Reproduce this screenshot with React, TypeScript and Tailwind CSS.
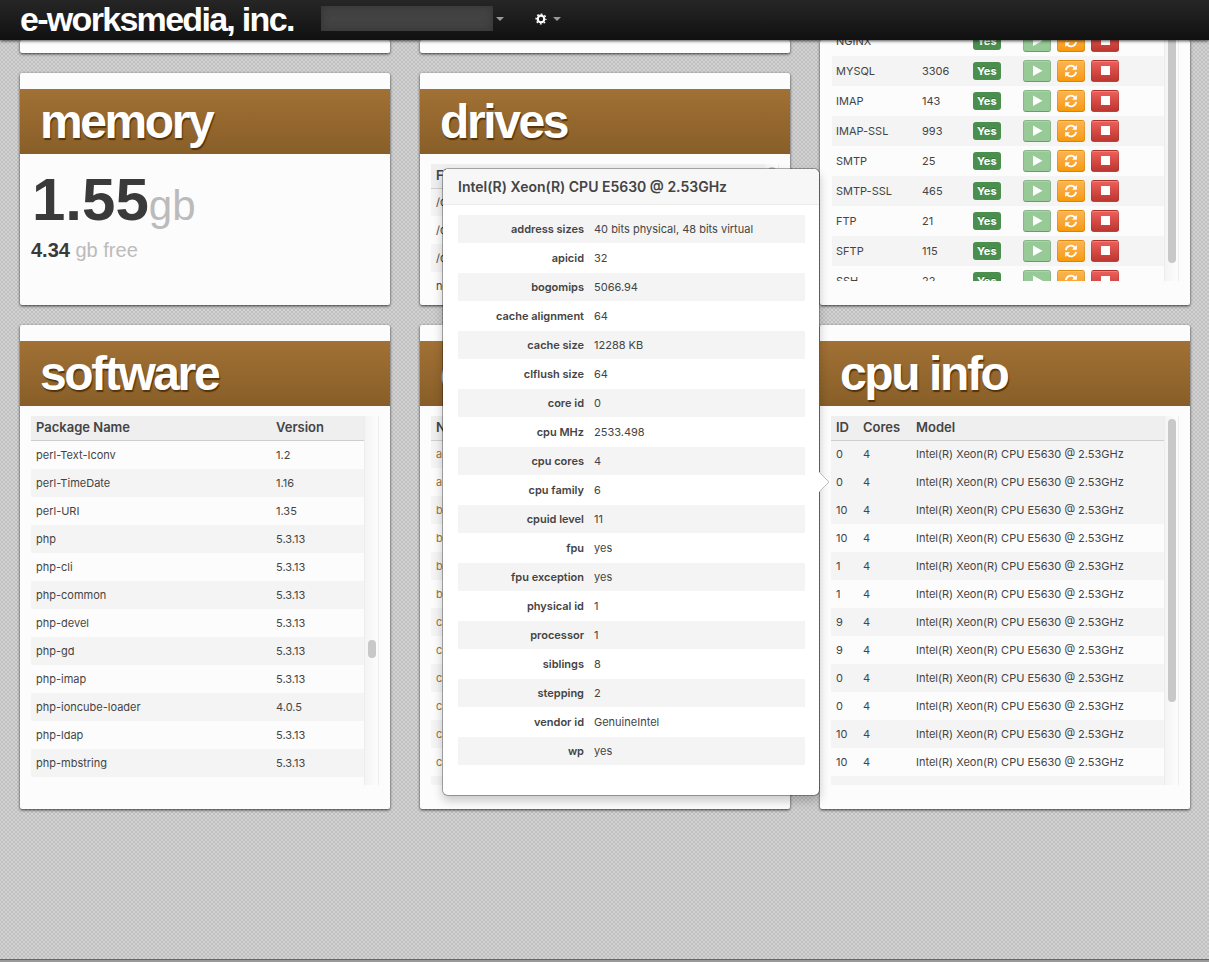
import React from "react";

type Row = string[];

const services: Row[] = [
  ["NGINX", ""],
  ["MYSQL", "3306"],
  ["IMAP", "143"],
  ["IMAP-SSL", "993"],
  ["SMTP", "25"],
  ["SMTP-SSL", "465"],
  ["FTP", "21"],
  ["SFTP", "115"],
  ["SSH", "22"],
];

const packages: Row[] = [
  ["perl-Text-Iconv", "1.2"],
  ["perl-TimeDate", "1.16"],
  ["perl-URI", "1.35"],
  ["php", "5.3.13"],
  ["php-cli", "5.3.13"],
  ["php-common", "5.3.13"],
  ["php-devel", "5.3.13"],
  ["php-gd", "5.3.13"],
  ["php-imap", "5.3.13"],
  ["php-ioncube-loader", "4.0.5"],
  ["php-ldap", "5.3.13"],
  ["php-mbstring", "5.3.13"],
];

const model = "Intel(R) Xeon(R) CPU E5630 @ 2.53GHz";
const cpuIds = ["0", "0", "10", "10", "1", "1", "9", "9", "0", "0", "10", "10"];

const details: Row[] = [
  ["address sizes", "40 bits physical, 48 bits virtual"],
  ["apicid", "32"],
  ["bogomips", "5066.94"],
  ["cache alignment", "64"],
  ["cache size", "12288 KB"],
  ["clflush size", "64"],
  ["core id", "0"],
  ["cpu MHz", "2533.498"],
  ["cpu cores", "4"],
  ["cpu family", "6"],
  ["cpuid level", "11"],
  ["fpu", "yes"],
  ["fpu exception", "yes"],
  ["physical id", "1"],
  ["processor", "1"],
  ["siblings", "8"],
  ["stepping", "2"],
  ["vendor id", "GenuineIntel"],
  ["wp", "yes"],
];

const domains = ["a", "a", "b", "b", "b", "b", "c", "c", "c", "c", "c", "c"];

const cardBox = "bg-[#fcfcfc] rounded-[2px] shadow-[0_1px_3px_rgba(0,0,0,0.75)]";

function Card({ title, children, className = "" }: { title: string; children: React.ReactNode; className?: string }) {
  return (
    <section className={`${cardBox} relative flex flex-col pt-4 ${className}`}>
      <h2 className="h-[65px] shrink-0 bg-linear-to-b from-[#a17135] to-[#885e28] pl-5 font-['Liberation_Sans',sans-serif] text-[48px] leading-[66px] font-bold tracking-tighter text-white [text-shadow:1px_2px_1px_rgba(70,40,0,0.8)]">
        {title}
      </h2>
      {children}
    </section>
  );
}

function Scroller({ children, thumb, className = "" }: { children: React.ReactNode; thumb: string; className?: string }) {
  return (
    <div className={`flex overflow-hidden px-[11px] ${className}`}>
      <div className="min-w-0 flex-1">{children}</div>
      <div className="w-[15px] shrink-0 self-stretch border-x border-[#ececec] bg-linear-to-r from-[#f4f4f4] to-[#fdfdfd] px-[3px]">
        <div className={`w-2 rounded-full bg-[#c8c8c8] ${thumb}`} />
      </div>
    </div>
  );
}

const headRow = "h-6 border-b border-[#cfcfcf] bg-[#efefef] text-left text-[13px] leading-[23px]";
const th = "pl-[5px] font-semibold";
const td = "py-0 pl-[5px] whitespace-nowrap";

function Play() {
  return (
    <svg viewBox="0 0 14 14" className="size-[14px]" fill="#fff"><path d="M3 1.5v10.5l9.5-5.2z" /></svg>
  );
}

function Refresh() {
  return (
    <svg viewBox="0 0 14 14" className="size-[14px]" fill="none" stroke="#fff" strokeWidth="1.8">
      <path d="M1.9 6.2A5.1 5.1 0 0 1 10.9 3.6" />
      <path d="M12.1 7.8A5.1 5.1 0 0 1 3.1 10.4" />
      <path d="M12.8 1v4.8H8z" fill="#fff" stroke="none" />
      <path d="M1.2 13V8.2H6z" fill="#fff" stroke="none" />
    </svg>
  );
}

function Stop() {
  return (
    <svg viewBox="0 0 14 14" className="size-[14px]" fill="#fff"><path d="M3 2h9v9H3z" /></svg>
  );
}

const btn = "flex h-[22px] w-7 items-center justify-center rounded-[3px] border border-black/10 border-b-black/25 shadow-[inset_0_1px_0_rgba(255,255,255,0.2)]";

export default function App() {
  return (
    <div className="flex min-h-screen flex-col bg-[#d2d2d2] bg-[radial-gradient(#c0c0c0_28%,transparent_30%),radial-gradient(#c0c0c0_28%,transparent_30%)] bg-size-[4px_4px] bg-position-[0_0,2px_2px] font-['Inter',sans-serif] text-[11px] text-[#444]">
      <header className="relative z-30 flex h-10 items-center bg-linear-to-b from-[#262626] to-[#111] pb-[3px] pl-5 shadow-[0_1px_3px_rgba(0,0,0,0.7)]">
        <a href="#" className="w-[301px] font-['Liberation_Sans',sans-serif] text-[34px] leading-9 font-bold tracking-tighter whitespace-nowrap text-white">
          e-worksmedia, inc.
        </a>
        <button aria-label="Server" className="flex items-center gap-[3px]">
          <span className="h-[25px] w-[172px] bg-[#434343] shadow-[inset_0_0_8px_#333]" />
          <span className="border-x-4 border-t-4 border-x-transparent border-t-[#999]" />
        </button>
        <button aria-label="Settings" className="ml-[30px] flex items-center gap-[5px]">
          <svg viewBox="0 0 14 14" className="size-[14px]" fill="none" stroke="#fff">
            <circle cx="7" cy="7" r="3.3" strokeWidth="2.2" />
            <circle cx="7" cy="7" r="4.9" strokeWidth="1.4" strokeDasharray="1.8 2.05" strokeDashoffset="0.9" />
          </svg>
          <span className="border-x-4 border-t-4 border-x-transparent border-t-[#999]" />
        </button>
      </header>

      <main className="grid grid-cols-3 gap-x-[30px] gap-y-5 pr-[19px] pl-5">
        <div className={`${cardBox} h-[13px]`} />
        <div className={`${cardBox} h-[13px]`} />

        <section className={`${cardBox} row-span-2 pb-6`}>
          <Scroller className="h-[241px]" thumb="h-[223px] rounded-t-none">
            <table className="-mt-3.5 ml-px w-[calc(100%-1px)] table-fixed border-collapse">
              <tbody>
                {services.map(([name, port], i) => (
                  <tr key={name} className={`h-[30px] ${i % 2 ? "bg-[#f4f4f4]" : ""}`}>
                    <td className="w-[85px] py-0 pl-1 whitespace-nowrap">{name}</td>
                    <td className={`${td} w-[51px]`}>{port}</td>
                    <td className={`${td} w-[50px]`}>
                      <span className="inline-block h-[18px] rounded-[3px] bg-[#4b8f4e] px-1 leading-[18px] font-bold text-white [text-shadow:0_-1px_0_rgba(0,0,0,0.25)]">Yes</span>
                    </td>
                    <td className={td}>
                      <div className="flex gap-1.5">
                        <button aria-label={`Start ${name}`} className={`${btn} bg-[#97ca97]`}><Play /></button>
                        <button aria-label={`Restart ${name}`} className={`${btn} bg-linear-to-b from-[#fbb450] to-[#f89a06]`}><Refresh /></button>
                        <button aria-label={`Stop ${name}`} className={`${btn} bg-linear-to-b from-[#ee5f5b] to-[#bd362f]`}><Stop /></button>
                      </div>
                    </td>
                  </tr>
                ))}
              </tbody>
            </table>
          </Scroller>
        </section>

        <Card title="memory" className="h-[232px]">
          <div className="px-[11px] pt-4 font-['Liberation_Sans',sans-serif] text-[#bbb]">
            <p className="pl-px text-[42px] leading-[60px]">
              <strong className="text-[60px] text-[#3a3a3a]">1.55</strong>gb
            </p>
            <p className="text-[20px] leading-7">
              <strong className="text-[#3a3a3a]">4.34</strong> gb free
            </p>
          </div>
        </Card>

        <Card title="drives" className="h-[232px]">
          <Scroller className="mt-[10px] h-[136px]" thumb="mt-[3px] h-20">
            <table className="w-full border-collapse">
              <thead><tr className={headRow}><th className={th}>Filesystem</th></tr></thead>
              <tbody>
                {["/dev", "/dev", "/dev", "none"].map((d, i) => (
                  <tr key={i} className={`h-7 ${i % 2 ? "" : "bg-[#f4f4f4]"}`}><td className={td}>{d}</td></tr>
                ))}
              </tbody>
            </table>
          </Scroller>
        </Card>

        <Card title="software" className="h-[484px]">
          <Scroller className="mt-[10px] h-[369px]" thumb="mt-56 h-[18px]">
            <table className="w-full table-fixed border-collapse">
              <thead>
                <tr className={headRow}>
                  <th className={`${th} w-60`}>Package Name</th>
                  <th className={th}>Version</th>
                </tr>
              </thead>
              <tbody>
                {packages.map(([name, version], i) => (
                  <tr key={name} className={`${i ? "h-7" : "h-[29px]"} ${i % 2 ? "bg-[#f4f4f4]" : ""}`}>
                    <td className={td}>{name}</td>
                    <td className={td}>{version}</td>
                  </tr>
                ))}
              </tbody>
            </table>
          </Scroller>
        </Card>

        <Card title="domains" className="h-[484px]">
          <Scroller className="mt-[10px] h-[369px]" thumb="mt-[3px] h-20">
            <table className="w-full border-collapse">
              <thead><tr className={headRow}><th className={th}>Name</th></tr></thead>
              <tbody>
                {[...domains, ""].map((d, i) => (
                  <tr key={i} className={`h-7 ${i % 2 ? "" : "bg-[#f4f4f4]"}`}>
                    <td className={td}><a href="#" className="text-[#a17135]">{d}</a></td>
                  </tr>
                ))}
              </tbody>
            </table>
          </Scroller>
        </Card>

        <Card title="cpu info" className="h-[484px]">
          <Scroller className="mt-[10px] h-[369px]" thumb="mt-[3px] h-[283px]">
            <table className="w-full table-fixed border-collapse">
              <thead>
                <tr className={headRow}>
                  <th className={`${th} w-[27px]`}>ID</th>
                  <th className={`${th} w-[53px]`}>Cores</th>
                  <th className={th}>Model</th>
                </tr>
              </thead>
              <tbody>
                {[...cpuIds, ""].map((id, i) => (
                  <tr key={i} className={`h-7 ${i % 2 && i !== 1 ? "" : "bg-[#f4f4f4]"}`}>
                    <td className={td}>{id}</td>
                    <td className={td}>{id && "4"}</td>
                    <td className={td}>{id && model}</td>
                  </tr>
                ))}
              </tbody>
            </table>
          </Scroller>

          <div role="tooltip" className="absolute -top-[157px] right-full z-20 w-[378px] rounded-md border border-black/30 bg-white bg-clip-padding pb-[29px] shadow-[0_5px_10px_rgba(0,0,0,0.2)]">
            <h3 className="h-9 rounded-t-md border-b border-[#ebebeb] bg-[#f7f7f7] px-[15px] text-sm leading-[35px] font-semibold">{model}</h3>
            <div className="pt-[9px] pr-[14px] pl-[15px]">
              <table className="w-full table-fixed border-separate border-spacing-x-0 border-spacing-y-px">
                <tbody>
                  {details.map(([key, value], i) => (
                    <tr key={key} className={`h-7 ${i % 2 ? "" : "bg-[#f4f4f4]"}`}>
                      <th scope="row" className="w-[126px] p-0 text-right font-semibold">{key}</th>
                      <td className="py-0 pl-[10px]">{value}</td>
                    </tr>
                  ))}
                </tbody>
              </table>
            </div>
            <svg viewBox="0 0 12 22" className="absolute top-[302px] left-full h-[22px] w-3" fill="#fff">
              <path d="M0 1L10 11L0 21" stroke="#bbb" />
              <path d="M0 2L9 11L0 20z" />
            </svg>
          </div>
        </Card>
      </main>
      <footer className="mt-auto h-[3px] border-t border-[#666] bg-[#999]" />
    </div>
  );
}
